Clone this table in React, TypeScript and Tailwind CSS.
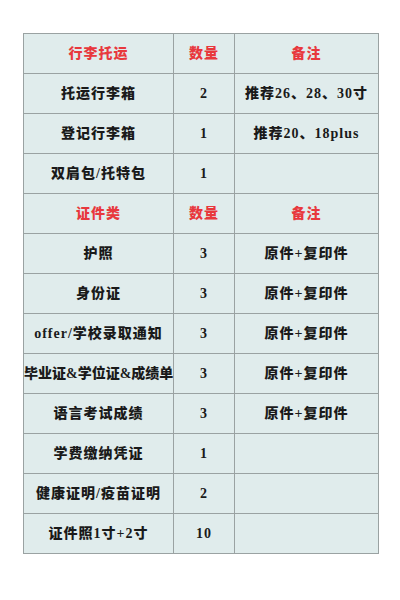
import React from "react";

type Row = { a: string; b: string; c: string; header?: boolean; tight?: boolean };

const rows: Row[] = [
  { a: "行李托运", b: "数量", c: "备注", header: true },
  { a: "托运行李箱", b: "2", c: "推荐26、28、30寸" },
  { a: "登记行李箱", b: "1", c: "推荐20、18plus" },
  { a: "双肩包/托特包", b: "1", c: "" },
  { a: "证件类", b: "数量", c: "备注", header: true },
  { a: "护照", b: "3", c: "原件+复印件" },
  { a: "身份证", b: "3", c: "原件+复印件" },
  { a: "offer/学校录取通知", b: "3", c: "原件+复印件" },
  { a: "毕业证&学位证&成绩单", b: "3", c: "原件+复印件", tight: true },
  { a: "语言考试成绩", b: "3", c: "原件+复印件" },
  { a: "学费缴纳凭证", b: "1", c: "" },
  { a: "健康证明/疫苗证明", b: "2", c: "" },
  { a: "证件照1寸+2寸", b: "10", c: "" },
];

export default function App() {
  return (
    <div
      className="w-[400px] h-[600px] bg-white pt-[33px] pl-[23px]"
      style={{ fontFamily: '"Liberation Serif", "Noto Sans CJK SC", serif' }}
    >
      <table className="table-fixed w-[355px] border-collapse bg-[#e0ecec] text-[14px] font-black text-[#1a1a1a]">
        <colgroup>
          <col className="w-[150px]" />
          <col className="w-[61px]" />
          <col className="w-[144px]" />
        </colgroup>
        <tbody>
          {rows.map((r, i) => (
            <tr key={i} className="h-[40px]">
              {[r.a, r.b, r.c].map((t, j) => (
                <td
                  key={j}
                  className={
                    "border border-[#9aa2a2] text-center align-middle p-0 whitespace-nowrap " +
                    (r.tight && j === 0 ? "tracking-[0px] " : "tracking-[1px] ") +
                    (r.header ? "text-[#e8383d]" : "")
                  }
                >
                  {t}
                </td>
              ))}
            </tr>
          ))}
        </tbody>
      </table>
    </div>
  );
}
